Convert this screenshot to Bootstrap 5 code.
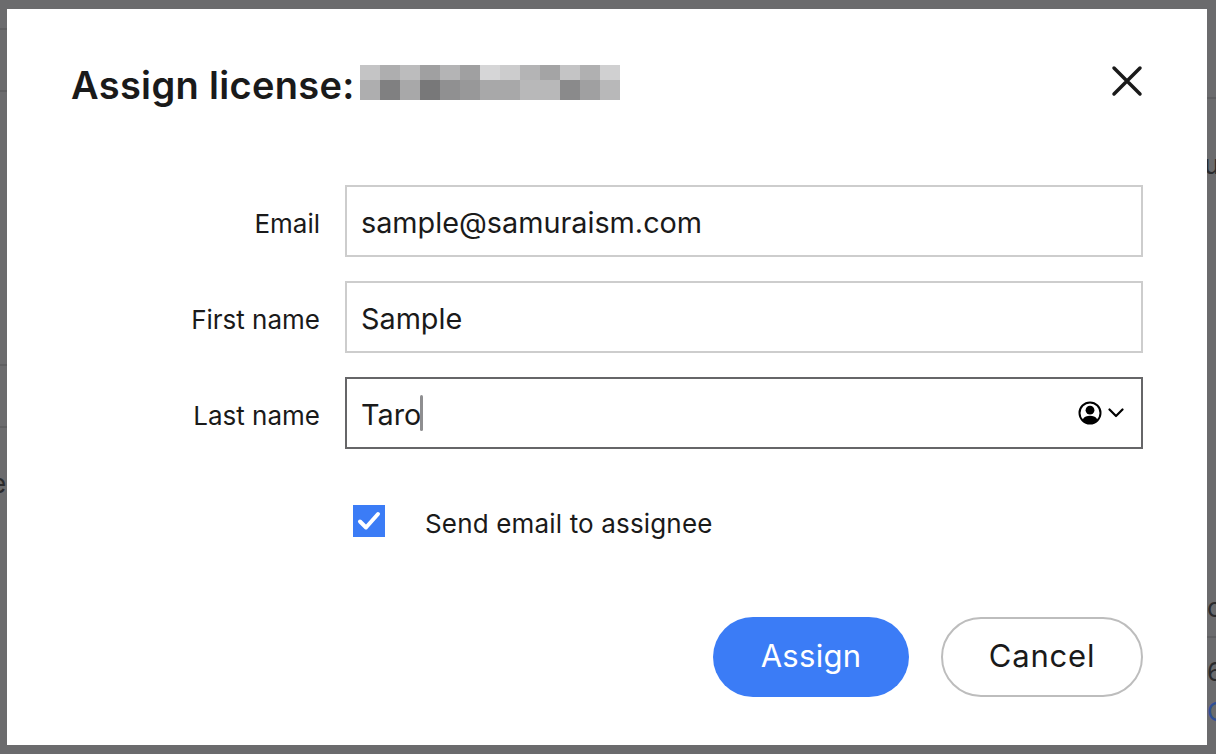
<!DOCTYPE html>
<html lang="en">
<head>
<meta charset="utf-8">
<title>Assign license</title>
<link href="https://cdn.jsdelivr.net/npm/bootstrap@5.3.0/dist/css/bootstrap.min.css" rel="stylesheet">
<style>
html,body{height:100%}
body{background:#6b6b6d;font-family:Inter,"Liberation Sans",sans-serif;color:#1a1a1a;overflow:hidden;position:relative;height:754px}
.bg-rule{position:absolute;height:2px;background:#5f5f61}
.bg-rule.lft{left:0;width:7px}
.bg-rule.rgt{left:1207px;width:9px}
.bg-char{position:absolute;font-size:26px;line-height:30px;color:#2a2a2c}
.sheet{position:absolute;left:7px;top:9px;width:1200px;height:736px;background:#fff;border:0;border-radius:0;padding:40px 64px 48px 64px}
.sheet-head{height:72px;margin-bottom:64px;padding:0;border:0}
.sheet-title{font-size:38px;font-weight:600;line-height:72px;letter-spacing:.33px;margin:0;color:#1a1a1a}
.mosaic{display:grid;grid-template-columns:repeat(13,20px);grid-template-rows:15px 20px;margin-left:5px;margin-top:-6px}
.shut{width:32px;height:32px;background:none;border:0;padding:0;display:block;margin-top:-8px}
.field-row{display:flex;align-items:center;gap:24px;margin-bottom:24px}
.field-lbl{width:250px;text-align:right;font-size:26px;line-height:32px;margin:6px 0 0;padding-right:1px;color:#1a1a1a}
.field-box{flex:1;position:relative}
.field-ctl{height:72px;border:2px solid #cdcdcd;border-radius:0;font-size:28.8px;padding:3px 14px 0;color:#1a1a1a;font-family:inherit}
.field-ctl.act,.field-ctl.act:focus{border-color:#666668;box-shadow:none}
.caret{position:absolute;left:75px;top:18px;width:3px;height:36px;background:#8e8e90;border-radius:2px}
.autofill{position:absolute;right:19px;top:24px;display:flex;align-items:center;gap:6px}
.check-row{display:flex;align-items:center;margin:56px 0 0 282px;height:32px}
.tick{width:32px;height:32px;background:#3b7cf6;display:flex;align-items:center;justify-content:center;flex:none}
.check-lbl{margin:6px 0 0 40px;font-size:26px;letter-spacing:.16px;line-height:32px;color:#1a1a1a}
.acts{display:flex;justify-content:flex-end;gap:32px;margin-top:80px}
.pill{height:80px;border-radius:40px;font-size:31px;line-height:1;font-weight:400;padding:0 0 4px}
.pill-go{width:196px;background:#3b7cf6;border:0;color:#fff;letter-spacing:.3px}
.pill-no{width:202px;background:#fff;border:2px solid #bdbdbd;color:#1a1a1a;letter-spacing:.8px}
</style>
</head>
<body>
<div class="bg-rule lft" style="top:28px"></div>
<div class="bg-rule lft" style="top:90px"></div>
<div class="bg-rule lft" style="top:364px"></div>
<div class="bg-rule lft" style="top:426px"></div>
<div class="bg-rule rgt" style="top:97px"></div>
<div class="bg-rule rgt" style="top:636px"></div>
<span class="bg-char" style="left:-9px;top:469px">e</span>
<span class="bg-char" style="left:1204px;top:150px">u</span>
<span class="bg-char" style="left:1207px;top:593px">c</span>
<span class="bg-char" style="left:1207px;top:657px">6</span>
<span class="bg-char" style="left:1207px;top:697px;color:#2f4f95">G</span>

<div class="modal-content sheet" role="dialog">
  <div class="modal-header sheet-head d-flex align-items-center justify-content-between">
    <div class="d-flex align-items-center">
      <h1 class="sheet-title">Assign license:</h1>
      <div class="mosaic" aria-hidden="true">
        <i style="background:#c4c4c5"></i><i style="background:#aeaeaf"></i><i style="background:#bcbcbd"></i><i style="background:#a0a0a1"></i><i style="background:#b4b4b5"></i><i style="background:#a0a0a1"></i><i style="background:#d6d6d7"></i><i style="background:#cccccd"></i><i style="background:#b4b4b5"></i><i style="background:#a4a4a5"></i><i style="background:#c4c4c5"></i><i style="background:#b0b0b1"></i><i style="background:#d0d0d1"></i>
        <i style="background:#aeaeaf"></i><i style="background:#808081"></i><i style="background:#a8a8a9"></i><i style="background:#787879"></i><i style="background:#909091"></i><i style="background:#989899"></i><i style="background:#a8a8a9"></i><i style="background:#a8a8a9"></i><i style="background:#b8b8b9"></i><i style="background:#b8b8b9"></i><i style="background:#8a8a8b"></i><i style="background:#a0a0a1"></i><i style="background:#b8b8b9"></i>
      </div>
    </div>
    <button class="shut" type="button" aria-label="Close">
      <svg width="32" height="32" viewBox="0 0 32 32"><path d="M3 3 29 29M29 3 3 29" stroke="#1a1a1a" stroke-width="3.5" stroke-linecap="round"/></svg>
    </button>
  </div>
  <form>
    <div class="field-row">
      <label class="field-lbl" for="f1">Email</label>
      <div class="field-box"><input id="f1" class="form-control field-ctl" value="sample@samuraism.com"></div>
    </div>
    <div class="field-row">
      <label class="field-lbl" for="f2">First name</label>
      <div class="field-box"><input id="f2" class="form-control field-ctl" value="Sample"></div>
    </div>
    <div class="field-row">
      <label class="field-lbl" for="f3">Last name</label>
      <div class="field-box">
        <input id="f3" class="form-control field-ctl act" value="Taro">
        <span class="caret"></span>
        <span class="autofill" aria-hidden="true">
          <svg width="24" height="24" viewBox="0 0 24 24"><circle cx="12" cy="12" r="10.5" fill="#fff" stroke="#000" stroke-width="2"/><circle cx="12" cy="9.2" r="4.4" fill="#000"/><path d="M4.6 18.4C6.5 15.6 9 14.8 12 14.8s5.5.8 7.4 3.6C17.5 21 15 22 12 22s-5.5-1-7.4-3.6Z" fill="#000"/></svg>
          <svg width="16" height="10" viewBox="0 0 16 10"><path d="M1.5 1.5 8 8l6.5-6.5" fill="none" stroke="#000" stroke-width="2.2" stroke-linecap="round" stroke-linejoin="round"/></svg>
        </span>
      </div>
    </div>
    <div class="check-row">
      <span class="tick"><svg width="24" height="20" viewBox="0 0 24 20"><path d="M3 10.5l6 6L21 3" fill="none" stroke="#fff" stroke-width="4" stroke-linecap="round" stroke-linejoin="round"/></svg></span>
      <span class="check-lbl">Send email to assignee</span>
    </div>
    <div class="acts">
      <button type="button" class="btn pill pill-go">Assign</button>
      <button type="button" class="btn pill pill-no">Cancel</button>
    </div>
  </form>
</div>
<script src="https://cdn.jsdelivr.net/npm/bootstrap@5.3.0/dist/js/bootstrap.bundle.min.js"></script>
</body>
</html>
